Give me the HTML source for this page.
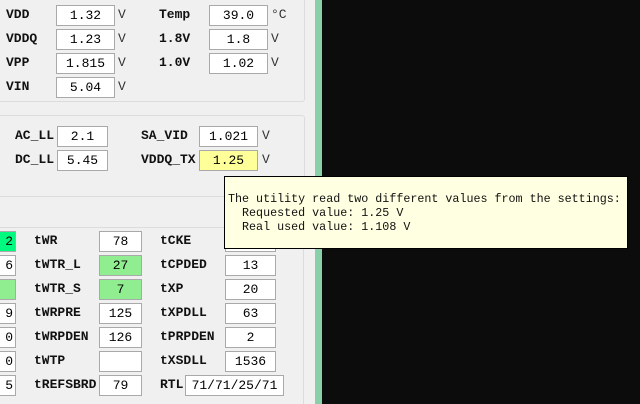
<!DOCTYPE html>
<html style="width:640px;height:404px;overflow:hidden"><head><meta charset="utf-8"><style>
*{margin:0;padding:0;box-sizing:border-box}
body{width:640px;height:404px;overflow:hidden;background:#0c0c0c;position:relative;font-family:"Liberation Mono",monospace}
#panel{position:absolute;left:0;top:0;width:315px;height:404px;background:#f0f0f0;overflow:hidden}
#green{position:absolute;left:315px;top:0;width:7px;height:404px;background:#88cfaa}
.grp{position:absolute;border:1px solid #dcdcdc;border-radius:3px}
.l{position:absolute;font-weight:bold;font-size:13px;color:#111;line-height:20px;white-space:pre}
.b{position:absolute;height:21px;background:#fff;border:1px solid #a9a9a9;font-size:13px;line-height:19px;text-align:center;color:#000}
.u{position:absolute;font-size:13px;line-height:20px;color:#333}
#tip{position:absolute;left:224px;top:176px;width:404px;height:73px;background:#ffffe1;border:1px solid #000;font-size:11.7px;line-height:14px;color:#111;padding:15px 0 0 3px;white-space:pre}
</style></head><body>
<div id="panel">
<div class="grp" style="left:-5px;top:-5px;width:310px;height:107px"></div>
<div class="grp" style="left:-5px;top:115px;width:310px;height:82px"></div>
<div class="grp" style="left:-5px;top:227px;width:309px;height:190px"></div>

<div class="l" style="left:6px;top:5px">VDD</div><div class="b" style="left:56px;top:5px;width:59px">1.32</div><div class="u" style="left:118px;top:5px">V</div>
<div class="l" style="left:6px;top:29px">VDDQ</div><div class="b" style="left:56px;top:29px;width:59px">1.23</div><div class="u" style="left:118px;top:29px">V</div>
<div class="l" style="left:6px;top:53px">VPP</div><div class="b" style="left:56px;top:53px;width:59px">1.815</div><div class="u" style="left:118px;top:53px">V</div>
<div class="l" style="left:6px;top:77px">VIN</div><div class="b" style="left:56px;top:77px;width:59px">5.04</div><div class="u" style="left:118px;top:77px">V</div>
<div class="l" style="left:159px;top:5px">Temp</div><div class="b" style="left:209px;top:5px;width:59px">39.0</div><div class="u" style="left:271px;top:5px">°C</div>
<div class="l" style="left:159px;top:29px">1.8V</div><div class="b" style="left:209px;top:29px;width:59px">1.8</div><div class="u" style="left:271px;top:29px">V</div>
<div class="l" style="left:159px;top:53px">1.0V</div><div class="b" style="left:209px;top:53px;width:59px">1.02</div><div class="u" style="left:271px;top:53px">V</div>

<div class="l" style="left:15px;top:126px">AC_LL</div><div class="b" style="left:57px;top:126px;width:51px">2.1</div>
<div class="l" style="left:15px;top:150px">DC_LL</div><div class="b" style="left:57px;top:150px;width:51px">5.45</div>
<div class="l" style="left:141px;top:126px">SA_VID</div><div class="b" style="left:199px;top:126px;width:59px">1.021</div><div class="u" style="left:262px;top:126px">V</div>
<div class="l" style="left:141px;top:150px">VDDQ_TX</div><div class="b" style="left:199px;top:150px;width:59px;background:#ffff99">1.25</div><div class="u" style="left:262px;top:150px">V</div>

<div class="b" style="left:-30px;top:231px;width:46px;background:#00fa80;text-align:right;padding-right:2px">2</div>
<div class="b" style="left:-30px;top:255px;width:46px;text-align:right;padding-right:2px">6</div>
<div class="b" style="left:-30px;top:279px;width:46px;background:#90ee90"></div>
<div class="b" style="left:-30px;top:303px;width:46px;text-align:right;padding-right:2px">9</div>
<div class="b" style="left:-30px;top:327px;width:46px;text-align:right;padding-right:2px">0</div>
<div class="b" style="left:-30px;top:351px;width:46px;text-align:right;padding-right:2px">0</div>
<div class="b" style="left:-30px;top:375px;width:46px;text-align:right;padding-right:2px">5</div>

<div class="l" style="left:34px;top:231px">tWR</div><div class="b" style="left:99px;top:231px;width:43px">78</div>
<div class="l" style="left:34px;top:255px">tWTR_L</div><div class="b" style="left:99px;top:255px;width:43px;background:#90ee90">27</div>
<div class="l" style="left:34px;top:279px">tWTR_S</div><div class="b" style="left:99px;top:279px;width:43px;background:#90ee90">7</div>
<div class="l" style="left:34px;top:303px">tWRPRE</div><div class="b" style="left:99px;top:303px;width:43px">125</div>
<div class="l" style="left:34px;top:327px">tWRPDEN</div><div class="b" style="left:99px;top:327px;width:43px">126</div>
<div class="l" style="left:34px;top:351px">tWTP</div><div class="b" style="left:99px;top:351px;width:43px"></div>
<div class="l" style="left:34px;top:375px">tREFSBRD</div><div class="b" style="left:99px;top:375px;width:43px">79</div>

<div class="l" style="left:160px;top:231px">tCKE</div><div class="b" style="left:225px;top:231px;width:51px">20</div>
<div class="l" style="left:160px;top:255px">tCPDED</div><div class="b" style="left:225px;top:255px;width:51px">13</div>
<div class="l" style="left:160px;top:279px">tXP</div><div class="b" style="left:225px;top:279px;width:51px">20</div>
<div class="l" style="left:160px;top:303px">tXPDLL</div><div class="b" style="left:225px;top:303px;width:51px">63</div>
<div class="l" style="left:160px;top:327px">tPRPDEN</div><div class="b" style="left:225px;top:327px;width:51px">2</div>
<div class="l" style="left:160px;top:351px">tXSDLL</div><div class="b" style="left:225px;top:351px;width:51px">1536</div>
<div class="l" style="left:160px;top:375px">RTL</div><div class="b" style="left:185px;top:375px;width:99px">71/71/25/71</div>
</div>
<div id="green"></div>

<div id="tip">The utility read two different values from the settings:
  Requested value: 1.25 V
  Real used value: 1.108 V</div>
</body></html>
